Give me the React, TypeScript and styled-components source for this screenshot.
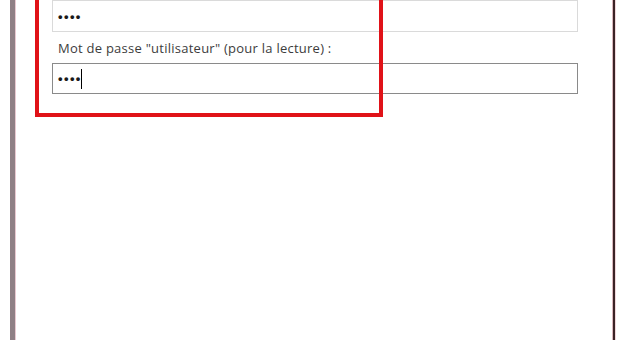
import * as React from "react";
import styled, { createGlobalStyle } from "styled-components";

const GlobalStyle = createGlobalStyle`
  html, body {
    margin: 0;
    padding: 0;
    background: #ffffff;
    overflow: hidden;
  }
  #root {
    height: 340px;
  }
`;

const Screen = styled.div`
  position: relative;
  display: flex;
  height: 340px;
  width: 624px;
  padding: 0 8px 0 10px;
  box-sizing: border-box;
  background: #ffffff;
  font-family: "Open Sans", "Noto Sans", sans-serif;
`;

const LeftFrame = styled.div`
  width: 5px;
  flex: none;
  background: #8f8085;
  border-right: 1px solid #e8c9d0;
`;

const RightFrame = styled.div`
  width: 2px;
  flex: none;
  background: #3b2326;
  border-left: 1px solid #d9b8bd;
  border-right: 1px solid #f0d8dc;
`;

const Panel = styled.div`
  flex: 1;
  display: flex;
  flex-direction: column;
  padding: 0 34px 0 36px;
`;

const Label = styled.div`
  margin: 9px 0 7px 6px;
  font-size: 13px;
  line-height: 15px;
  letter-spacing: 0.25px;
  color: #3c3c3c;
  white-space: nowrap;
`;

const Field = styled.div<{ $focused?: boolean }>`
  box-sizing: border-box;
  height: ${(p) => (p.$focused ? 31 : 32)}px;
  display: flex;
  align-items: center;
  padding-left: 5px;
  border: 1px solid ${(p) => (p.$focused ? "#8a8a8a" : "#dadada")};
  background: #ffffff;
  font-family: "Liberation Sans", Arial, sans-serif;
  font-size: 13px;
  letter-spacing: 1.4px;
  font-weight: bold;
  color: #1a1a1a;
`;

const Caret = styled.span`
  display: inline-block;
  width: 1px;
  height: 20px;
  margin-left: -1px;
  background: #000000;
`;

// annotation overlay drawn on top of the screenshot
const Highlight = styled.div`
  position: absolute;
  left: 35px;
  top: -20px;
  width: 348px;
  height: 137px;
  box-sizing: border-box;
  border: 4px solid #e01218;
  pointer-events: none;
`;

export default function App() {
  return (
    <>
      <GlobalStyle />
      <Screen>
        <LeftFrame />
        <Panel>
          <Field>••••</Field>
          <Label>Mot de passe "utilisateur" (pour la lecture) :</Label>
          <Field $focused>
            ••••
            <Caret />
          </Field>
        </Panel>
        <RightFrame />
        <Highlight />
      </Screen>
    </>
  );
}
